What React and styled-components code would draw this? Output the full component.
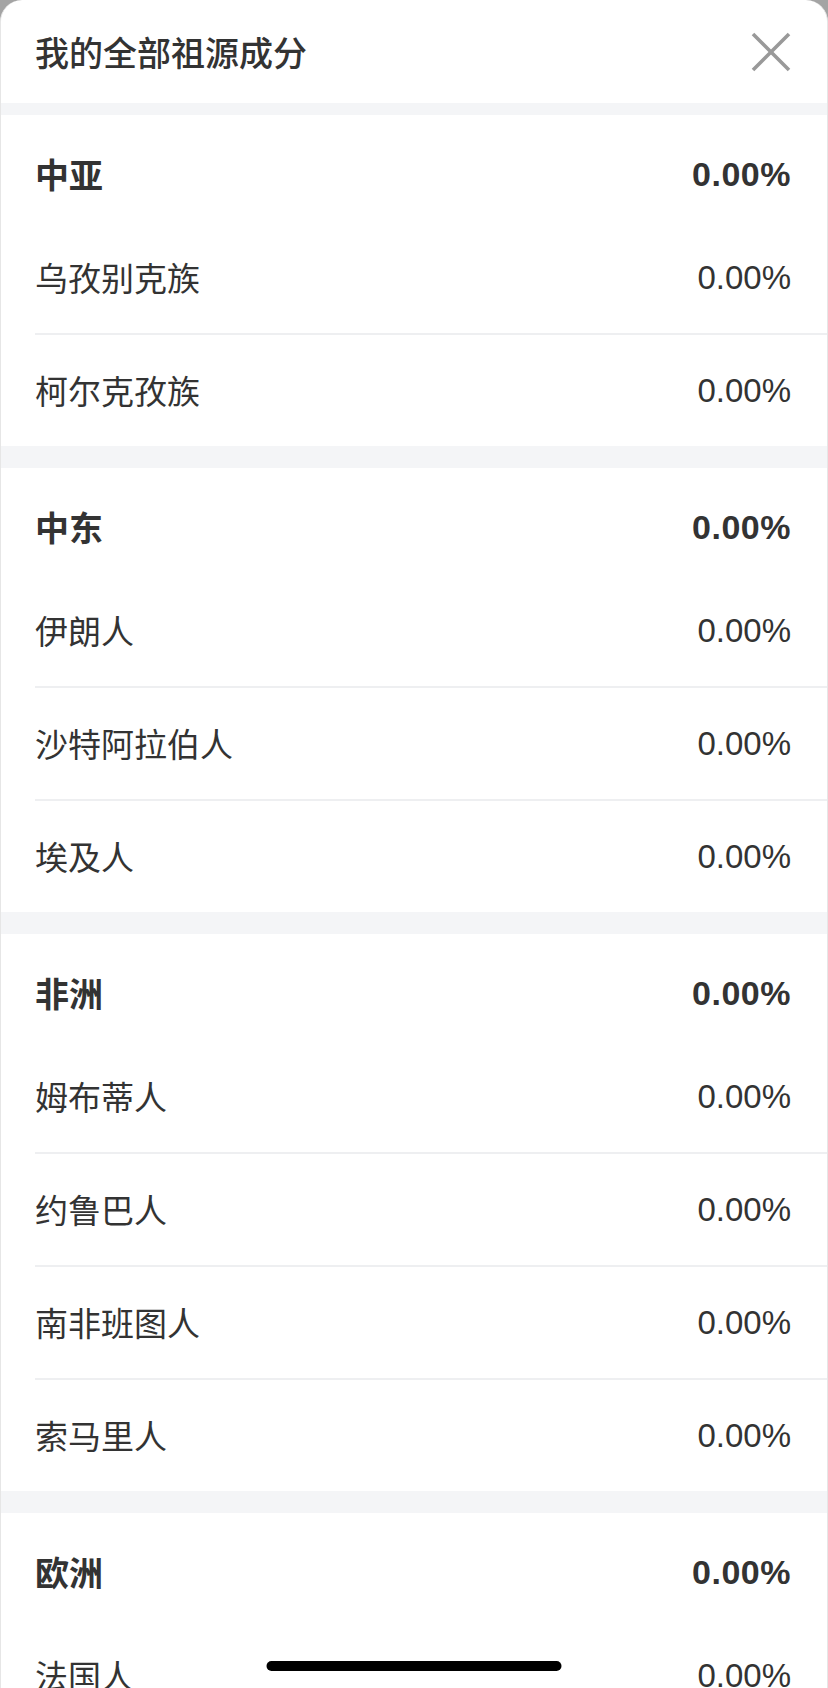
import React from "react";
import styled, { createGlobalStyle } from "styled-components";

const Global = createGlobalStyle`
  html, body {
    margin: 0;
    padding: 0;
    background: #a4a4a4;
    overflow: hidden;
  }
  * { box-sizing: border-box; }
`;

const Sheet = styled.div`
  height: 1688px;
  overflow: hidden;
  background: #ffffff;
  border-left: 1px solid #e6e6e6;
  border-right: 1px solid #e6e6e6;
  border-radius: 22px 22px 0 0;
  font-family: "Liberation Sans", "Noto Sans CJK SC", sans-serif;
  color: #333333;
`;

const TitleBar = styled.header`
  height: 103px;
  display: flex;
  align-items: center;
  justify-content: space-between;
  padding: 0 34px 0 34px;
`;

const Title = styled.h1`
  margin: 0;
  font-family: "Noto Sans CJK SC", sans-serif;
  font-size: 34px;
  font-weight: 500;
  color: #333333;
  line-height: 1;
`;

const CloseButton = styled.button`
  width: 40px;
  height: 40px;
  padding: 0;
  border: none;
  background: none;
  display: flex;
  align-items: center;
  justify-content: center;
  margin-right: 2px;
`;

const Band = styled.div`
  height: ${(p) => (p.$thin ? 12 : 22)}px;
  background: #f4f5f7;
`;

const SectionHead = styled.div`
  height: 106px;
  padding: 12px 36px 0 34px;
  display: flex;
  align-items: center;
  justify-content: space-between;
`;

const RegionName = styled.span`
  font-family: "Noto Sans CJK SC", sans-serif;
  font-size: 34px;
  font-weight: 700;
  line-height: 1;
`;

const RegionValue = styled.span`
  font-family: "Liberation Sans", sans-serif;
  font-size: 34px;
  font-weight: 700;
  letter-spacing: 0.5px;
  line-height: 1;
`;

const Row = styled.div`
  margin-left: 34px;
  height: ${(p) => (p.$first ? 112 : 113)}px;
  border-top: ${(p) => (p.$first ? "none" : "2px solid #eeeff1")};
  padding-right: 36px;
  display: flex;
  align-items: center;
  justify-content: space-between;
`;

const Label = styled.span`
  font-family: "Noto Sans CJK SC", sans-serif;
  font-size: 33px;
  font-weight: 400;
  line-height: 1;
`;

const Value = styled.span`
  font-family: "Liberation Sans", sans-serif;
  font-size: 33px;
  font-weight: 400;
  line-height: 1;
`;

const HomeIndicator = styled.div`
  position: fixed;
  left: 50%;
  bottom: 17px;
  transform: translateX(-50%);
  width: 295px;
  height: 10px;
  border-radius: 5px;
  background: #000000;
`;

const sections = [
  { name: "中亚", items: ["乌孜别克族", "柯尔克孜族"] },
  { name: "中东", items: ["伊朗人", "沙特阿拉伯人", "埃及人"] },
  { name: "非洲", items: ["姆布蒂人", "约鲁巴人", "南非班图人", "索马里人"] },
  { name: "欧洲", items: ["法国人", "英国人", "德国人"] },
];

const CloseIcon = () => (
  <svg width="40" height="40" viewBox="0 0 40 40" fill="none">
    <path d="M2 2 L38 38 M38 2 L2 38" stroke="#999999" strokeWidth="3.6" strokeLinecap="butt" />
  </svg>
);

export default function App() {
  return (
    <>
      <Global />
      <Sheet>
        <TitleBar>
          <Title>我的全部祖源成分</Title>
          <CloseButton aria-label="关闭">
            <CloseIcon />
          </CloseButton>
        </TitleBar>
        {sections.map((s, i) => (
          <section key={s.name}>
            <Band $thin={i === 0} />
            <SectionHead>
              <RegionName>{s.name}</RegionName>
              <RegionValue>0.00%</RegionValue>
            </SectionHead>
            {s.items.map((it, j) => (
              <Row key={it} $first={j === 0}>
                <Label>{it}</Label>
                <Value>0.00%</Value>
              </Row>
            ))}
          </section>
        ))}
      </Sheet>
      <HomeIndicator />
    </>
  );
}
